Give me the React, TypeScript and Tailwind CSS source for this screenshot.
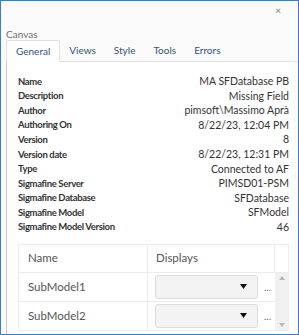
const PROPS: [string, string][] = [
  ["Name", "MA SFDatabase PB"],
  ["Description", "Missing Field"],
  ["Author", "pimsoft\\Massimo Aprà"],
  ["Authoring On", "8/22/23, 12:04 PM"],
  ["Version", "8"],
  ["Version date", "8/22/23, 12:31 PM"],
  ["Type", "Connected to AF"],
  ["Sigmafine Server", "PIMSD01-PSM"],
  ["Sigmafine Database", "SFDatabase"],
  ["Sigmafine Model", "SFModel"],
  ["Sigmafine Model Version", "46"],
];

const TABS = ["General", "Views", "Style", "Tools", "Errors"];

function DisplaySelect() {
  return (
    <div className="flex items-center h-full pl-[7px]">
      <div className="w-[103px] h-[24px] rounded-[3px] border border-[#dcdcdc] bg-[#f3f3f3] flex items-center justify-end pr-[10px]">
        <svg width="7" height="5" viewBox="0 0 7 5">
          <path d="M0 0H7L3.5 5Z" fill="#111" />
        </svg>
      </div>
      <span className="ml-[6px] text-[10px] text-[#666] leading-none">...</span>
    </div>
  );
}

export default function App() {
  return (
    <div
      className="w-[299px] h-[335px] border border-[#3f7cc4] bg-[#fafafa] flex flex-col overflow-hidden"
      style={{ fontFamily: 'Lato, "Open Sans", sans-serif' }}
    >
      {/* Title bar */}
      <div className="h-[27px] flex justify-end pr-[17px] pt-[4px]">
        <span className="text-[10px] text-[#6a7a90] leading-none">×</span>
      </div>
      <div className="pl-[5px] text-[10px] text-[#707070] leading-[12px] h-[12px]">Canvas</div>

      {/* Tabs */}
      <div className="flex h-[22px] pl-[5px]">
        {TABS.map((t, i) =>
          i === 0 ? (
            <div
              key={t}
              className="px-[9px] h-[22px] flex items-center bg-white border border-b-0 border-[#e2e2e2] rounded-t-[2px] text-[10px] text-[#33547a]"
            >
              {t}
            </div>
          ) : (
            <div key={t} className="flex flex-col">
              <div className="px-[9px] h-[21px] flex items-center text-[10px] text-[#33547a]">{t}</div>
              <div className="h-[1px] bg-[#e2e2e2]" />
            </div>
          )
        )}
        <div className="flex-1 flex flex-col justify-end">
          <div className="h-[1px] bg-[#e2e2e2]" />
        </div>
      </div>

      {/* Content */}
      <div className="flex-1 ml-[5px] mr-[4px] bg-white border-l border-[#c8c8c8] pl-[11px] pr-[5px] pt-[12px]">
        <div className="flex flex-col">
          {PROPS.map(([k, v]) => (
            <div key={k} className="flex justify-between h-[14.6px] items-center text-[10.5px] leading-none text-[#333]">
              <span className="font-bold text-[9.5px] tracking-[-0.35px]">{k}</span>
              <span>{v}</span>
            </div>
          ))}
        </div>

        {/* Table */}
        <div className="mt-[9px] border border-[#ececec] text-[11.5px] text-[#555]">
          <div className="grid grid-cols-[129px_127px_1fr] h-[28px] border-b border-[#ececec]">
            <div className="pl-[9px] flex items-center border-r border-[#ececec]">Name</div>
            <div className="pl-[8px] flex items-center border-r border-[#ececec]">Displays</div>
            <div />
          </div>
          <div className="grid grid-cols-[129px_127px_1fr]">
            <div className="flex flex-col">
              <div className="h-[29px] pl-[9px] flex items-center border-b border-r border-[#ececec]">SubModel1</div>
              <div className="h-[28px] pl-[9px] flex items-center border-r border-[#ececec]">SubModel2</div>
            </div>
            <div className="flex flex-col">
              <div className="h-[29px] border-b border-[#ececec]">
                <DisplaySelect />
              </div>
              <div className="h-[28px]">
                <DisplaySelect />
              </div>
            </div>
            <div className="bg-[#f0f0f0] flex flex-col items-center justify-between py-[3px]">
              <svg width="6" height="4" viewBox="0 0 6 4">
                <path d="M0 4L3 0L6 4Z" fill="#b8b8b8" />
              </svg>
              <svg width="6" height="4" viewBox="0 0 6 4">
                <path d="M0 0H6L3 4Z" fill="#b8b8b8" />
              </svg>
            </div>
          </div>
        </div>
      </div>
    </div>
  );
}
